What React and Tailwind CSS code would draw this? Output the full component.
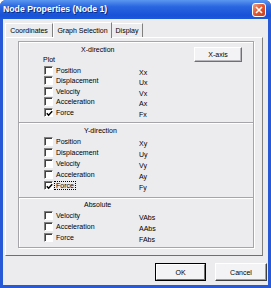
import React from "react";

function Box({ checked }) {
  return (
    <span className="relative inline-block w-[9px] h-[9px] shrink-0 bg-white border-t border-l border-t-[#808080] border-l-[#808080] border-r border-b border-r-white border-b-white shadow-[inset_1px_1px_0_#404040]">
      {checked && (
        <svg className="absolute left-[1px] top-[1px]" width="7" height="7" viewBox="0 0 7 7">
          <path d="M0.8 3.2 L2.6 5.2 L6.2 1.2" fill="none" stroke="#000" strokeWidth="1.5" />
        </svg>
      )}
    </span>
  );
}

function Row({ label, value, checked, focus, h }) {
  return (
    <div className={`flex items-center pl-[25px] ${h}`}>
      <Box checked={checked} />
      <div className="w-[86px] pl-[3px] flex">
        <span className={focus ? "outline outline-1 outline-dotted outline-black px-[1px] -ml-[1px]" : ""}>{label}</span>
      </div>
      <span className="mt-[4px]">{value}</span>
    </div>
  );
}

function Sep() {
  return <div className="h-[2px] border-t border-t-[#a6a5a9] border-b border-b-white" />;
}

export default function App() {
  return (
    <div className="w-[271px] h-[288px] flex flex-col bg-[#2759d6] rounded-t-[6px] overflow-hidden font-['Liberation_Sans',Arial,sans-serif] text-[7px] text-black leading-none">
      {/* title bar */}
      <div className="h-[19px] shrink-0 flex items-center bg-[linear-gradient(#5a97f0,#2a66e0_35%,#1852d8_80%,#1d5ad8)] pl-[3px] pr-[5px]">
        <span className="text-white font-bold text-[8.7px] [text-shadow:1px_1px_0_#0a2a80]">Node Properties (Node 1)</span>
        <div className="ml-auto w-[14px] h-[14px] rounded-[3px] border border-white bg-[linear-gradient(135deg,#f0a080,#e0562e_50%,#c84020)] flex items-center justify-center">
          <svg width="8" height="8" viewBox="0 0 8 8">
            <path d="M1 1 L7 7 M7 1 L1 7" stroke="#fff" strokeWidth="1.6" />
          </svg>
        </div>
      </div>
      {/* body */}
      <div className="flex-1 mx-[3px] mb-[3px] bg-[#ecebee] flex flex-col">
        {/* tabs */}
        <div className="h-[18px] flex items-end pl-[2px] pt-[3px]">
          <div className="h-[14px] w-[48px] flex items-center justify-center border-t border-l border-t-white border-l-white border-r border-r-[#808080] bg-[#ecebee]">
            Coordinates
          </div>
          <div className="relative h-[16px] w-[59px] -mb-[1px] flex items-center justify-center border-t border-l border-t-white border-l-white border-r border-r-[#808080] bg-[#ecebee] z-10 pb-[1px]">
            Graph Selection
          </div>
          <div className="h-[14px] w-[31px] flex items-center justify-center border-t border-t-white border-r border-r-[#808080] bg-[#ecebee]">
            Display
          </div>
        </div>
        {/* panel */}
        <div className="ml-[2px] w-[258px] h-[219px] border-t border-l border-t-white border-l-white border-r border-b border-r-[#808080] border-b-[#6f6f6f] pt-[3px]">
          <div className="ml-[12px] w-[236px] h-[207px] border border-[#a6a5a9] shadow-[inset_1px_1px_0_#fff,1px_1px_0_#fff] flex flex-col">
            {/* X section header */}
            <div className="h-[23px] flex">
              <div className="flex flex-col pt-[2px]">
                <div className="h-[10px] flex items-center pl-[62px]">X-direction</div>
                <div className="h-[10px] flex items-center pl-[24px]">Plot</div>
              </div>
              <div className="ml-auto mr-[11px] mt-[5px] w-[48px] h-[15px] flex items-center justify-center bg-[#f3f3f5] border-t border-l border-t-white border-l-white border-r border-b border-r-[#707070] border-b-[#707070] shadow-[inset_-1px_-1px_0_#b8b8bc]">
                X-axis
              </div>
            </div>
            <Row label="Position" value="Xx" h="h-[10.5px]" />
            <Row label="Displacement" value="Ux" h="h-[10.5px]" />
            <Row label="Velocity" value="Vx" h="h-[10.5px]" />
            <Row label="Acceleration" value="Ax" h="h-[10.5px]" />
            <Row label="Force" value="Fx" checked h="h-[10.5px]" />
            <div className="mt-[4.5px]">
              <Sep />
            </div>
            <div className="h-[12px] flex items-center pl-[65px]">Y-direction</div>
            <Row label="Position" value="Xy" h="h-[11px]" />
            <Row label="Displacement" value="Uy" h="h-[11px]" />
            <Row label="Velocity" value="Vy" h="h-[11px]" />
            <Row label="Acceleration" value="Ay" h="h-[11px]" />
            <Row label="Force" value="Fy" checked focus h="h-[11px]" />
            <div className="mt-[6px]">
              <Sep />
            </div>
            <div className="h-[11px] flex items-center pl-[65px]">Absolute</div>
            <Row label="Velocity" value="VAbs" h="h-[11px]" />
            <Row label="Acceleration" value="AAbs" h="h-[11px]" />
            <Row label="Force" value="FAbs" h="h-[11px]" />
          </div>
        </div>
        {/* buttons */}
        <div className="flex justify-end gap-[9px] pr-[1px] pt-[7px]">
          <div className="w-[51px] h-[18px] border border-black flex">
            <div className="flex-1 flex items-center justify-center bg-[#f3f3f5] border-t border-l border-t-white border-l-white border-r border-b border-r-[#707070] border-b-[#707070]">
              OK
            </div>
          </div>
          <div className="w-[52px] h-[18px] flex items-center justify-center bg-[#f3f3f5] border-t border-l border-t-white border-l-white border-r border-b border-r-[#404040] border-b-[#404040] shadow-[inset_-1px_-1px_0_#a0a0a4]">
            Cancel
          </div>
        </div>
      </div>
    </div>
  );
}
